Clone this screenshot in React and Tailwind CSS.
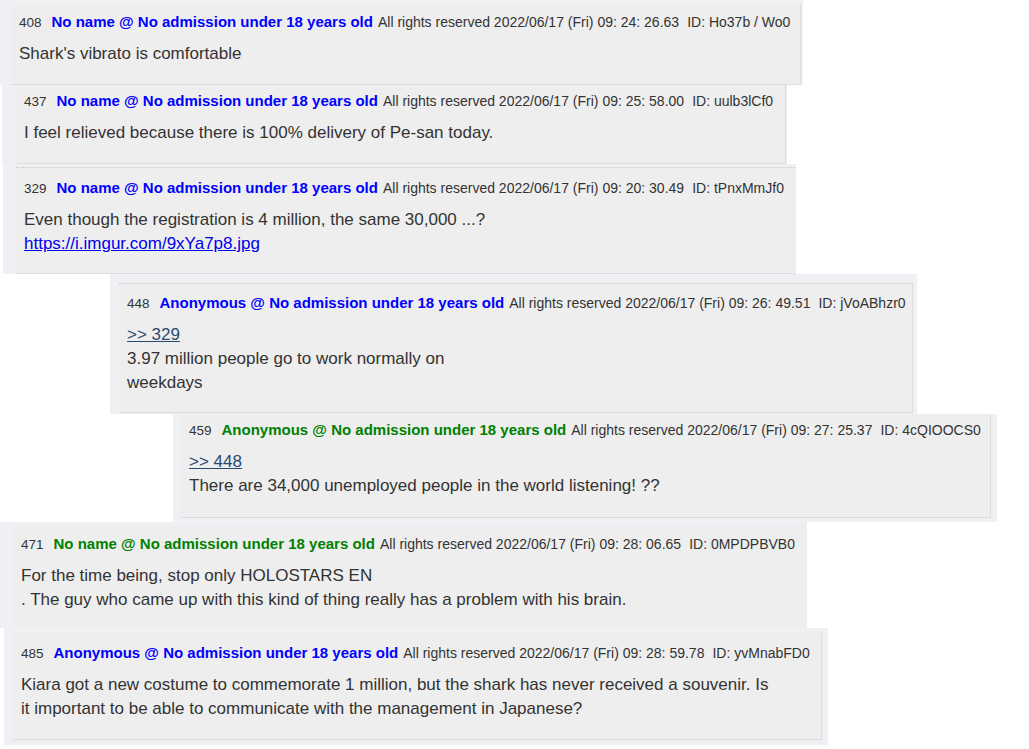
import React from 'react'

const posts = [
    {
        no: '408', name: 'No name', color: 'text-[#0000ff]', time: '09: 24: 26.63', id: 'Ho37b / Wo0',
        outer: 'ml-0 w-[803px] pl-[11px] pt-[4px] pr-[2px]',
        inner: 'border-r border-b border-[#dcdcdc] pt-2 pb-[18px]',
        body: [{ text: "Shark's vibrato is comfortable" }],
    },
    {
        no: '437', name: 'No name', color: 'text-[#0000ff]', time: '09: 25: 58.00', id: 'uulb3lCf0',
        outer: 'ml-[2px] w-[785px] pl-[14px] pr-[1px]',
        inner: 'border-r border-b border-[#dcdcdc] pt-[6px] pb-[18px]',
        body: [{ text: 'I feel relieved because there is 100% delivery of Pe-san today.' }],
    },
    {
        no: '329', name: 'No name', color: 'text-[#0000ff]', time: '09: 20: 30.49', id: 'tPnxMmJf0',
        outer: 'ml-[3px] w-[793px] pl-[13px] pt-[3px]',
        inner: 'border-t [border-top-style:dotted] border-t-[#c8c8c8] border-b border-b-[#dcdcdc] pt-[10px] pb-[17px]',
        body: [
            { text: 'Even though the registration is 4 million, the same 30,000 ...?' },
            { text: 'https://i.imgur.com/9xYa7p8.jpg', url: true },
        ],
    },
    {
        no: '448', name: 'Anonymous', color: 'text-[#0000ff]', time: '09: 26: 49.51', id: 'jVoABhzr0',
        outer: 'ml-[110px] w-[807px] pl-[9px] pt-[9px] pr-[4px] pb-[1px]',
        inner: 'border-t [border-top-style:dotted] border-t-[#c8c8c8] border-r border-b border-r-[#dcdcdc] border-b-[#dcdcdc] pt-[9px] pb-[17px]',
        body: [
            { text: '>> 329', anchor: true },
            { text: '3.97 million people go to work normally on' },
            { text: 'weekdays' },
        ],
    },
    {
        no: '459', name: 'Anonymous', color: 'text-[#008000]', time: '09: 27: 25.37', id: '4cQIOOCS0',
        outer: 'ml-[173px] w-[824px] pl-[8px] pr-[6px] pb-[4px]',
        inner: 'border-r border-b border-[#dcdcdc] pt-[6px] pb-[19px]',
        body: [
            { text: '>> 448', anchor: true },
            { text: 'There are 34,000 unemployed people in the world listening! ??' },
        ],
    },
    {
        no: '471', name: 'No name', color: 'text-[#008000]', time: '09: 28: 06.65', id: '0MPDPBVB0',
        outer: 'ml-0 w-[807px] pl-[13px] pt-[3px]',
        inner: 'pt-[9px] pb-[16px]',
        body: [
            { text: 'For the time being, stop only HOLOSTARS EN' },
            { text: '. The guy who came up with this kind of thing really has a problem with his brain.' },
        ],
    },
    {
        no: '485', name: 'Anonymous', color: 'text-[#0000ff]', time: '09: 28: 59.78', id: 'yvMnabFD0',
        outer: 'ml-[4px] w-[824px] pl-[9px] pt-[5px] pr-[6px] pb-[5px]',
        inner: 'border-r border-b border-[#dcdcdc] pt-[10px] pb-[18px]',
        body: [
            { text: 'Kiara got a new costume to commemorate 1 million, but the shark has never received a souvenir. Is' },
            { text: 'it important to be able to communicate with the management in Japanese?' },
        ],
    },
]

const Post = ({ post }) => {
    return (
        <div className={`bg-[#eff0f4] ${post.outer}`}>
            <div className={`bg-[#eeeeee] pl-2 ${post.inner}`}>

                {/* header line */}
                <div className="h-5 leading-5 whitespace-nowrap text-[14px] text-[#333]">
                    <span className="text-[13.5px]">{post.no}</span>
                    <span className={`ml-2.5 text-[15px] font-bold ${post.color}`}>
                        {post.name} @ No admission under 18 years old
                    </span>
                    <span className="ml-[5px]">All rights reserved 2022/06/17 (Fri) {post.time}</span>
                    <span className="ml-2">ID: {post.id}</span>
                </div>

                {/* message */}
                <div className="mt-2.5 text-[17px] leading-6 text-[#333]">
                    {post.body.map((line, i) => {
                        if (line.url) {
                            return (
                                <div key={i}>
                                    <span className="text-[#0000ee] underline">{line.text}</span>
                                </div>
                            )
                        }
                        if (line.anchor) {
                            return (
                                <div key={i}>
                                    <span className="text-[#2b4a70] underline">{line.text}</span>
                                </div>
                            )
                        }
                        return <div key={i} className="whitespace-nowrap">{line.text}</div>
                    })}
                </div>

            </div>
        </div>
    )
}

const App = () => {
    return (
        <div className="min-h-screen w-[1029px] bg-white font-['Liberation_Sans',Arial,sans-serif]">
            {posts.map((post) => (
                <Post key={post.no} post={post} />
            ))}
        </div>
    )
}

export default App
